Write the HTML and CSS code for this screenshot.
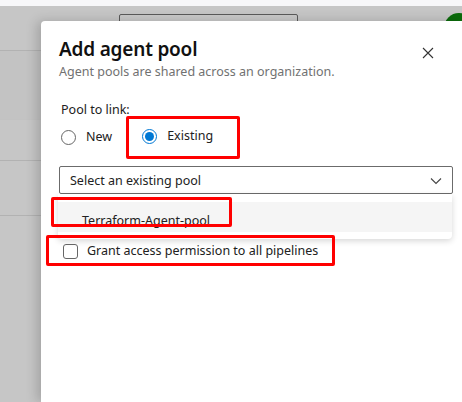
FILE: index.html
```html
<!DOCTYPE html>
<html>
<head>
<meta charset="utf-8">
<link rel="stylesheet" href="styles.css">
</head>
<body>
<div class="page">
  <div class="topstrip"></div>
  <div class="bg">
    <div class="bg-search"></div>
    <div class="bg-lines">
      <div class="bg-row r1"></div>
      <div class="bg-row r2"></div>
      <div class="bg-row r3"></div>
      <div class="bg-row r4"></div>
    </div>
  </div>
  <div class="avatar"></div>

  <div class="panel">
    <div class="panel-head">
      <div class="head-text">
        <div class="title">Add agent pool</div>
        <div class="subtitle">Agent pools are shared across an organization.</div>
      </div>
      <button class="close" aria-label="Close">
        <svg width="12" height="12" viewBox="0 0 12 12"><path d="M1 1 L11 11 M11 1 L1 11" stroke="#333" stroke-width="1.1" fill="none"/></svg>
      </button>
    </div>

    <div class="label">Pool to link:</div>
    <div class="radios">
      <label class="radio"><span class="circle"></span><span>New</span></label>
      <label class="radio checked"><span class="circle"><span class="dot"></span></span><span>Existing</span></label>
    </div>

    <div class="dropdown">
      <span>Select an existing pool</span>
      <svg width="12" height="8" viewBox="0 0 12 8"><path d="M1 1.5 L6 6.5 L11 1.5" stroke="#444" stroke-width="1.1" fill="none"/></svg>
    </div>
    <div class="menu">
      <div class="menu-item">Terraform-Agent-pool</div>
    </div>

    <label class="check"><span class="box"></span><span>Grant access permission to all pipelines</span></label>
  </div>

  <div class="mark m1"></div>
  <div class="mark m2"></div>
  <div class="mark m3"></div>
</div>
</body>
</html>
```

FILE: styles.css
```css
* { box-sizing: border-box; }
html, body { margin: 0; padding: 0; }
body {
  font-family: "Noto Sans", "Open Sans", sans-serif;
  width: 462px;
  height: 402px;
  overflow: hidden;
}
.page {
  position: relative;
  width: 462px;
  height: 402px;
  background: #c6c6c6;
  overflow: hidden;
}
.topstrip {
  height: 6px;
  background: #f7f7f9;
}
.bg {
  position: relative;
  height: 396px;
}
.bg-search {
  margin-left: 119px;
  margin-top: 8px;
  width: 179px;
  height: 20px;
  border: 1px solid #5a5a5a;
  border-radius: 2px;
  background: #c9c9c9;
}
.bg-lines {
  width: 41px;
  margin-top: 16px;
}
.bg-row {
  border-bottom: 1px solid #b2b2b2;
}
.r1 { height: 0; }
.r2 { height: 69px; border-bottom-color: #c2c2c2; background: #c3c3c3; }
.r3 { height: 41px; }
.r4 { height: 55px; }
.avatar {
  position: absolute;
  left: 444px;
  top: 13px;
  width: 30px;
  height: 30px;
  border-radius: 50%;
  background: #0b6b0b;
}
.panel {
  position: absolute;
  left: 41px;
  top: 21px;
  right: 0;
  bottom: 0;
  background: #fff;
  border-top-left-radius: 4px;
  box-shadow: -4px 0 12px rgba(0,0,0,0.18);
  padding: 15px 9px 0 18px;
  color: #212121;
}
.panel-head {
  display: flex;
  justify-content: space-between;
  align-items: flex-start;
}
.title {
  font-size: 19px;
  font-weight: 600;
  line-height: 26px;
  color: #111;
  letter-spacing: -0.2px;
}
.subtitle {
  margin-top: 2px;
  font-size: 12.5px;
  line-height: 16px;
  color: #717171;
}
.close {
  border: 0;
  background: none;
  padding: 0;
  margin: 11px 19px 0 0;
  width: 12px;
  height: 12px;
  display: block;
}
.close svg { display: block; }
.label {
  margin-top: 21px;
  margin-left: 2px;
  font-size: 12.5px;
  line-height: 17px;
}
.radios {
  display: flex;
  gap: 22px;
  margin-top: 8px;
  margin-left: 2px;
  font-size: 12.5px;
  line-height: 16px;
  height: 22px;
  align-items: center;
}
.radio {
  display: flex;
  align-items: center;
  gap: 10px;
}
.radio.checked { margin-left: 8px; position: relative; top: -1px; }
.circle {
  width: 15px;
  height: 15px;
  border: 1px solid #666;
  border-radius: 50%;
  display: flex;
  align-items: center;
  justify-content: center;
}
.radio.checked .circle { border-color: #0078d4; }
.dot {
  width: 9px;
  height: 9px;
  border-radius: 50%;
  background: #0078d4;
}
.dropdown {
  margin-top: 18px;
  width: 394px;
  height: 28px;
  border: 1px solid #6b6b6b;
  border-radius: 2px;
  display: flex;
  align-items: center;
  justify-content: space-between;
  padding: 0 10px 0 10px;
  font-size: 12.5px;
  color: #222;
}
.dropdown svg { display: block; margin-top: 1px; }
.menu {
  margin-left: -1px;
  width: 394px;
  height: 45px;
  background: #fff;
  border-radius: 0 0 4px 4px;
  box-shadow: 0 2px 6px rgba(0,0,0,0.16);
  padding-top: 8px;
}
.menu-item {
  height: 30px;
  background: #f5f5f5;
  font-size: 12.5px;
  line-height: 16px;
  padding: 11px 0 0 24px;
  overflow: hidden;
  color: #222;
}
.check {
  display: flex;
  align-items: center;
  gap: 9px;
  margin-top: 4px;
  margin-left: 4px;
  font-size: 12.5px;
  line-height: 16px;
  height: 16px;
}
.box {
  width: 15px;
  height: 15px;
  border: 1px solid #666;
  border-radius: 3px;
  flex: none;
}
.mark {
  position: absolute;
  border: 3px solid #ff0000;
  border-radius: 2px;
}
.m1 { left: 126px; top: 116px; width: 114px; height: 43px; }
.m2 { left: 51px; top: 197px; width: 181px; height: 30px; }
.m3 { left: 46px; top: 235px; width: 289px; height: 31px; }
```
